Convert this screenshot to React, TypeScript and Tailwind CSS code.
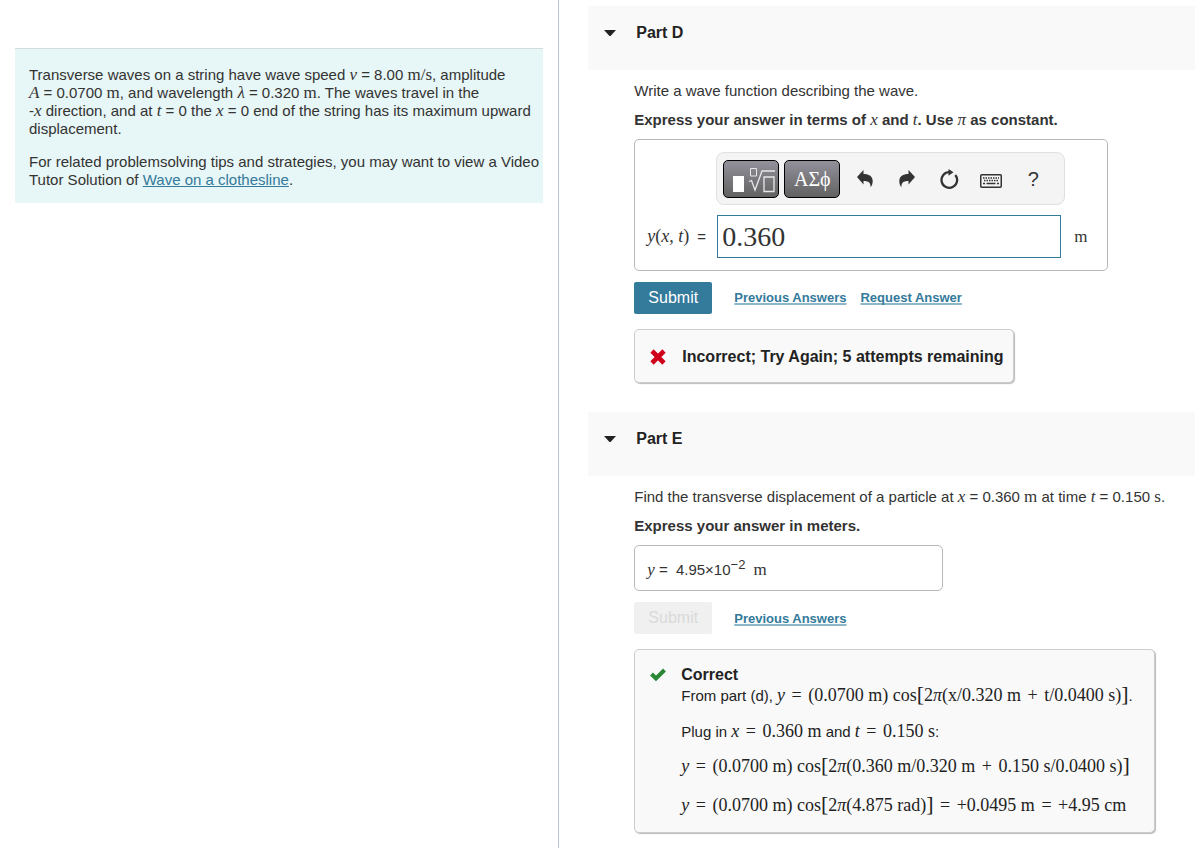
import type { ReactNode } from "react";

type Props = { children: ReactNode; className?: string };

// Italic variable
const V = ({ children }: { children: ReactNode }) => (
  <i className="font-['Liberation_Serif',serif] text-[17px] leading-none font-normal">{children}</i>
);

// Upright unit
const M = ({ children, className = "" }: Props) => (
  <span className={`font-['Liberation_Serif',serif] text-[17px] leading-none ${className}`}>
    {children}
  </span>
);

// Typeset expression
const Expr = ({ children }: { children: ReactNode }) => (
  <span className="font-['Liberation_Serif',serif] text-[18px] leading-none">{children}</span>
);

const Op = ({ children }: { children: ReactNode }) => <span className="mx-[2px]">{children}</span>;

const Bracket = ({ children }: { children: ReactNode }) => (
  <span className="text-[22px] leading-none">{children}</span>
);

const PartHeader = ({ title }: { title: string }) => (
  <button
    type="button"
    className="flex h-16 w-full items-start gap-5 bg-[#f9f9f9] px-4 pt-4 text-left"
  >
    <svg className="mt-[5px] h-3 w-3" viewBox="0 0 12 12" fill="#222">
      <path d="M0 3h12l-5 5.500q-1 1-2 0z" />
    </svg>
    <span className="text-[16px] leading-[21px] font-bold text-[#222]">{title}</span>
  </button>
);

const TextLink = ({ children }: { children: ReactNode }) => (
  <a
    href="#"
    className="text-[13px] font-bold text-[#337a9b] underline decoration-[#8cb7ca] decoration-2 underline-offset-1 [text-decoration-skip-ink:none]"
  >
    {children}
  </a>
);

const ToolButton = ({ label, children }: { label: string; children: ReactNode }) => (
  <button
    type="button"
    aria-label={label}
    className="flex h-[38px] w-14 items-center justify-center rounded-[5px] border border-black bg-linear-to-b from-[#93919b] to-[#626262] text-white"
  >
    {children}
  </button>
);

const IconButton = ({ label, children }: { label: string; children: ReactNode }) => (
  <button
    type="button"
    aria-label={label}
    className="flex h-[38px] w-6 items-center justify-center text-[#333]"
  >
    {children}
  </button>
);

const Undo = ({ className = "" }: { className?: string }) => (
  <svg className={`h-[18px] w-4 ${className}`} viewBox="0 0 16 18" fill="currentColor">
    <path d="M6.500 0v4c5.500 0 9.200 2.500 9.200 7 0 2.500-.7 4.500-2.200 6.300.3-4.300-1.500-6.300-7-6.300v3.500L0 7z" />
  </svg>
);

const App = () => {
  return (
    <div className="flex min-h-screen w-full overflow-hidden bg-white font-['Liberation_Sans',Arial,sans-serif] text-[15px] leading-[18px] text-[#333]">
      <aside className="w-[46.8%] shrink-0 border-r border-[#b4c6d8] px-[15px] pt-12">
        <div className="flex flex-col gap-[15px] border-t border-[#d3dcdb] bg-[#e7f6f6] px-[14px] pt-[17px] pb-[14px] whitespace-nowrap">
          <p>
            Transverse waves on a string have wave speed <V>v</V> = 8.00 <M>m/s</M>, amplitude
            <br />
            <V>A</V> = 0.0700 <M>m</M>, and wavelength <V>λ</V> = 0.320 <M>m</M>. The waves travel
            in the
            <br />-<V>x</V> direction, and at <V>t</V> = 0 the <V>x</V> = 0 end of the string has
            its maximum upward
            <br />
            displacement.
          </p>
          <p>
            For related problemsolving tips and strategies, you may want to view a Video
            <br />
            Tutor Solution of{" "}
            <a href="#" className="text-[#337a9b] underline">
              Wave on a clothesline
            </a>
            .
          </p>
        </div>
      </aside>

      <main className="min-w-0 flex-1 pt-[6px] pl-[29px]">
        <section className="mb-[29px]">
          <PartHeader title="Part D" />
          <div className="pt-3 pl-[46px]">
            <p>Write a wave function describing the wave.</p>
            <p className="mt-[11px] font-bold">
              Express your answer in terms of <V>x</V> and <V>t</V>. Use <V>π</V> as constant.
            </p>

            <div className="mt-[10px] w-[474px] rounded-[5px] border border-[#b8b8b8] py-3 pl-3">
              <div className="ml-[69px] flex h-[53px] w-[349px] items-center rounded-lg border border-[#e0e0e0] bg-[#f4f4f4] px-[6px]">
                <div className="flex gap-[5px]">
                  <ToolButton label="Templates">
                    <svg className="ml-1 h-7 w-11 shrink-0" viewBox="0 0 44 28" fill="none" stroke="#e8e8e8">
                      <path d="M2 11h11v16H2z" fill="#fff" stroke="none" />
                      <path d="M19.500 3.500h6v7.500h-6z" />
                      <path d="M33 12h10v14.500H33z" strokeWidth="1.300" />
                      <path d="M18 16.500l2.500-1 3.500 9.500 7-19h13" strokeWidth="1.300" />
                    </svg>
                  </ToolButton>
                  <ToolButton label="Greek symbols">
                    <span className="font-['Liberation_Serif',serif] text-[20px]">ΑΣϕ</span>
                  </ToolButton>
                </div>
                <div className="ml-[13px] flex gap-[18px]">
                  <IconButton label="Undo">
                    <Undo />
                  </IconButton>
                  <IconButton label="Redo">
                    <Undo className="-scale-x-100" />
                  </IconButton>
                  <IconButton label="Reset">
                    <svg className="h-5 w-5" viewBox="0 0 20 20">
                      <path
                        d="M10.500 3.200A7.800 7.800 0 1 0 16.300 6"
                        fill="none"
                        stroke="currentColor"
                        strokeWidth="2.300"
                      />
                      <path d="M9.500 0l5 3.300-5 3.500z" fill="currentColor" />
                    </svg>
                  </IconButton>
                  <IconButton label="Keyboard">
                    <svg className="mt-1 h-[14px] w-[22px]" viewBox="0 0 22 14" fill="none" stroke="currentColor">
                      <rect x="0.750" y="0.750" width="20.500" height="12.500" rx="1" strokeWidth="1.500" />
                      <path d="M3 4h16M4 6.500h14" strokeWidth="1.300" strokeDasharray="1.500 1" />
                      <path d="M3 9.500h2M6.500 9.500h9M17 9.500h2" strokeWidth="1.300" />
                    </svg>
                  </IconButton>
                  <IconButton label="Help">
                    <span className="text-[20px]">?</span>
                  </IconButton>
                </div>
              </div>

              <div className="mt-[10px] flex items-center">
                <label htmlFor="wave" className="w-[70px] whitespace-nowrap">
                  <Expr>
                    <i>y</i>(<i>x</i>, <i>t</i>)
                  </Expr>
                  <span className="ml-2">=</span>
                </label>
                <input
                  id="wave"
                  defaultValue="0.360"
                  className="h-[43px] w-[344px] border border-[#337a9b] px-1 font-['Liberation_Serif',serif] text-[28px] outline-none"
                />
                <M className="ml-[13px]">m</M>
              </div>
            </div>

            <div className="mt-[11px] flex items-center">
              <button type="button" className="h-8 w-[78px] rounded-xs bg-[#337a9b] text-[16px] text-white">
                Submit
              </button>
              <div className="ml-[22px] flex gap-[14px]">
                <TextLink>Previous Answers</TextLink>
                <TextLink>Request Answer</TextLink>
              </div>
            </div>

            <div className="mt-[15px] flex h-[54px] w-[380px] items-center rounded-[5px] border border-[#ccc] bg-[#f9f9f9] pt-px pl-[15px] whitespace-nowrap shadow-[1px_1px_1px_#bbb]">
              <svg className="h-4 w-4" viewBox="0 0 16 16">
                <path d="M2 2l12 12M14 2L2 14" stroke="#d0021b" strokeWidth="4.600" />
              </svg>
              <span className="ml-4 text-[16px] font-bold text-[#222]">
                Incorrect; Try Again; 5 attempts remaining
              </span>
            </div>
          </div>
        </section>

        <section>
          <PartHeader title="Part E" />
          <div className="pt-3 pl-[46px]">
            <p>
              Find the transverse displacement of a particle at <V>x</V> = 0.360 <M>m</M> at time{" "}
              <V>t</V> = 0.150 <M>s</M>.
            </p>
            <p className="mt-[11px] font-bold">Express your answer in meters.</p>

            <div className="mt-[10px] flex h-[46px] w-[309px] items-center rounded-[5px] border border-[#b8b8b8] pt-1 pl-3">
              <span>
                <V>y</V> = <span className="ml-1">4.95×10</span>
                <sup className="text-[13px]">−2</sup> <M className="ml-1">m</M>
              </span>
            </div>

            <div className="mt-[11px] flex items-center">
              <button type="button" disabled className="h-8 w-[78px] rounded-xs bg-[#f0f0f0] text-[16px] text-[#dadada]">
                Submit
              </button>
              <div className="ml-[22px]">
                <TextLink>Previous Answers</TextLink>
              </div>
            </div>

            <div className="mt-[15px] flex w-[521px] rounded-[5px] border border-[#ccc] bg-[#f9f9f9] py-4 pl-[15px] whitespace-nowrap shadow-[1px_1px_1px_#bbb]">
              <svg className="h-4 w-4 shrink-0" viewBox="0 0 16 16">
                <path d="M1.500 8l4.500 4.500L14.500 4" fill="none" stroke="#2a8736" strokeWidth="4" />
              </svg>
              <div className="ml-[15px] text-[#222]">
                <h3 className="text-[16px] font-bold">Correct</h3>
                <p className="flex h-5 items-center">
                  <span>
                    From part (d),{" "}
                    <Expr>
                      <i>y</i> <Op>=</Op> (0.0700 m) cos<Bracket>[</Bracket>2<i>π</i>(x/0.320 m{" "}
                      <Op>+</Op> t/0.0400 s)<Bracket>]</Bracket>
                    </Expr>
                    .
                  </span>
                </p>
                <p className="mt-[15px] flex h-6 items-center">
                  <span>
                    Plug in{" "}
                    <Expr>
                      <i>x</i> <Op>=</Op> 0.360 m
                    </Expr>{" "}
                    and{" "}
                    <Expr>
                      <i>t</i> <Op>=</Op> 0.150 s
                    </Expr>
                    :
                  </span>
                </p>
                <p className="mt-[10px] flex h-6 items-center">
                  <Expr>
                    <i>y</i> <Op>=</Op> (0.0700 m) cos<Bracket>[</Bracket>2<i>π</i>(0.360 m/0.320 m{" "}
                    <Op>+</Op> 0.150 s/0.0400 s)<Bracket>]</Bracket>
                  </Expr>
                </p>
                <p className="mt-[15px] flex h-6 items-center">
                  <Expr>
                    <i>y</i> <Op>=</Op> (0.0700 m) cos<Bracket>[</Bracket>2<i>π</i>(4.875 rad)
                    <Bracket>]</Bracket> <Op>=</Op> +0.0495 m <Op>=</Op> +4.95 cm
                  </Expr>
                </p>
              </div>
            </div>
          </div>
        </section>
      </main>
    </div>
  );
};

export default App;
